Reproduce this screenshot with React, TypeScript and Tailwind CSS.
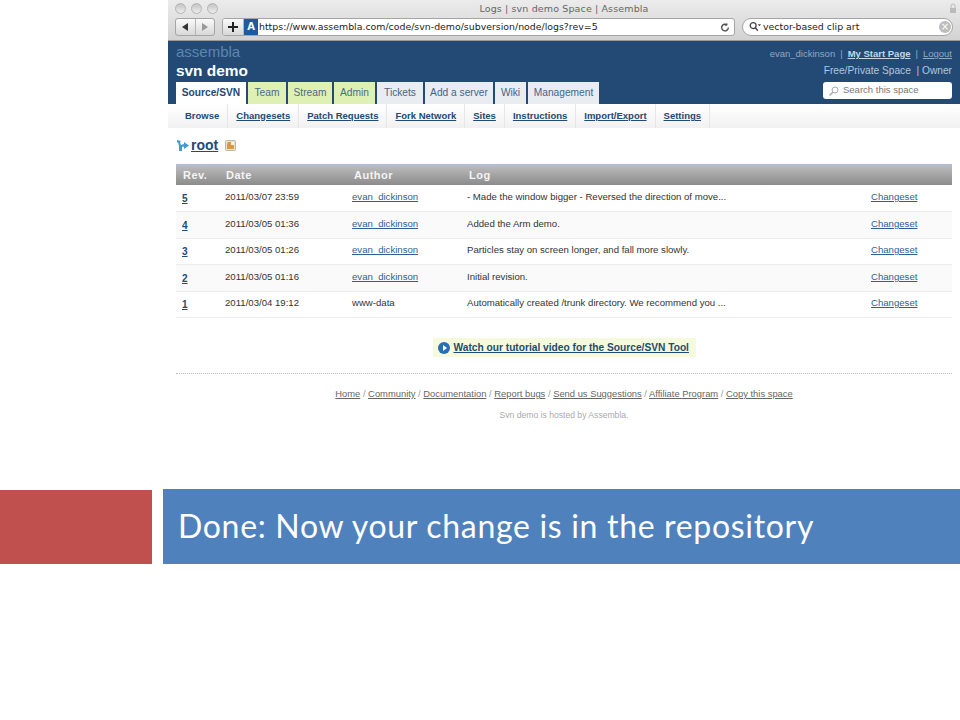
import React from "react";

const sans = "font-['Liberation_Sans',Arial,sans-serif]";

const tabs = [
  { label: "Team", green: true, w: "w-[38px]" },
  { label: "Stream", green: true, w: "w-[44px]" },
  { label: "Admin", green: true, w: "w-[41px]" },
  { label: "Tickets", green: false, w: "w-[46px]" },
  { label: "Add a server", green: false, w: "w-[68px]" },
  { label: "Wiki", green: false, w: "w-[31px]" },
  { label: "Management", green: false, w: "w-[71px]" },
];

const subnav = ["Changesets", "Patch Requests", "Fork Network", "Sites", "Instructions", "Import/Export", "Settings"];

const rows = [
  { rev: "5", date: "2011/03/07 23:59", author: "evan_dickinson", log: "- Made the window bigger - Reversed the direction of move...", h: "h-[27px]", bg: "bg-white" },
  { rev: "4", date: "2011/03/05 01:36", author: "evan_dickinson", log: "Added the Arm demo.", h: "h-[27px]", bg: "bg-[#fafafa]" },
  { rev: "3", date: "2011/03/05 01:26", author: "evan_dickinson", log: "Particles stay on screen longer, and fall more slowly.", h: "h-[26px]", bg: "bg-white" },
  { rev: "2", date: "2011/03/05 01:16", author: "evan_dickinson", log: "Initial revision.", h: "h-[27px]", bg: "bg-[#fafafa]" },
  { rev: "1", date: "2011/03/04 19:12", author: "www-data", log: "Automatically created /trunk directory. We recommend you ...", h: "h-[26px]", bg: "bg-white" },
];

const footerLinks = ["Home", "Community", "Documentation", "Report bugs", "Send us Suggestions", "Affiliate Program", "Copy this space"];

function TrafficLight() {
  return <span className="w-[11px] h-[11px] rounded-full bg-gradient-to-b from-[#c4c4c4] to-[#ededed] border border-[#b5b5b5]" />;
}

function BrowserChrome() {
  return (
    <div className="h-[41px] bg-gradient-to-b from-[#ececec] to-[#d2d2d2] border-b border-[#9a9a9a]">
      <div className="relative h-[17px] flex items-center pl-[7px] gap-[5px]">
        <TrafficLight />
        <TrafficLight />
        <TrafficLight />
        <div className="absolute inset-x-0 top-[2px] text-center text-[9.5px] leading-[14px] tracking-[0.13px] text-[#666] font-['DejaVu_Sans',sans-serif]">
          Logs | svn demo Space | Assembla
        </div>
        <svg className="absolute right-[3px] top-[3px]" width="8" height="11" viewBox="0 0 8 11">
          <path d="M2 5V3a2 2 0 0 1 4 0v2" fill="none" stroke="#bbb" />
          <rect x="1" y="5" width="6" height="5" fill="#bbb" />
        </svg>
      </div>
      <div className="h-[19px] flex items-center pl-[7px] font-['DejaVu_Sans',sans-serif] text-[9.4px] text-[#222]">
        <div className="flex h-[18px] w-[40px] rounded-[3px] border border-[#a5a5a5] bg-gradient-to-b from-[#fafafa] to-[#d8d8d8]">
          <div className="flex-1 flex items-center justify-center border-r border-[#b5b5b5]">
            <svg width="7" height="8" viewBox="0 0 7 8"><path d="M6 0v8L0 4z" fill="#333" /></svg>
          </div>
          <div className="flex-1 flex items-center justify-center">
            <svg width="7" height="8" viewBox="0 0 7 8"><path d="M1 0v8l6-4z" fill="#999" /></svg>
          </div>
        </div>
        <div className="ml-[7px] flex h-[18px] w-[513px] rounded-[3px] border border-[#a5a5a5] bg-white overflow-hidden">
          <div className="w-[21px] flex items-center justify-center border-r border-[#b5b5b5] bg-gradient-to-b from-[#fafafa] to-[#d8d8d8]">
            <svg width="10" height="10" viewBox="0 0 10 10"><path d="M5 0v10M0 5h10" stroke="#222" strokeWidth="2" /></svg>
          </div>
          <div className="w-[14px] h-[16px] bg-[#1f5a9e] text-white text-[10px] leading-[16px] text-center font-bold">A</div>
          <div className="ml-[1px] leading-[16px] flex-1 whitespace-nowrap">https://www.assembla.com/code/svn-demo/subversion/node/logs?rev=5</div>
          <svg className="mt-[3px] mr-[4px]" width="10" height="11" viewBox="0 0 24 24" fill="none" stroke="#555" strokeWidth="3.5">
            <path d="M20 12a8 8 0 1 1-3-6.2" />
            <path d="M17 1v6h-6" fill="#555" strokeWidth="1" />
          </svg>
        </div>
        <div className="ml-[7px] flex items-center h-[18px] w-[211px] rounded-full border border-[#a5a5a5] bg-white pl-[6px]">
          <svg width="12" height="11" viewBox="0 0 13 11" fill="none">
            <circle cx="4.5" cy="4.5" r="3.2" stroke="#444" strokeWidth="1.4" />
            <path d="M7 7l2.5 3" stroke="#444" strokeWidth="1.6" />
            <path d="M9.5 3h3.5l-1.7 2.2z" fill="#444" />
          </svg>
          <span className="ml-[2px] flex-1 leading-[14px]">vector-based clip art</span>
          <span className="mr-[1px] w-[12px] h-[12px] rounded-full bg-[#bdbdbd] text-white text-[10px] leading-[11px] text-center">×</span>
        </div>
      </div>
    </div>
  );
}

function SiteHeader() {
  return (
    <div className={`relative h-[63px] bg-[#224a75] ${sans}`}>
      <div className="pl-[8px] pt-[2px] h-[20px] text-[15px] leading-[18px] text-[#5f86ad]">assembla</div>
      <div className="pl-[8px] h-[19px] text-[15.4px] leading-[19px] font-bold text-white">svn demo</div>
      <div className="absolute left-[8px] bottom-0 flex h-[22px] items-stretch text-[10.2px]">
        <div className="w-[70px] mr-[2px] bg-white text-center font-bold text-[#224a75] leading-[22px]">Source/SVN</div>
        {tabs.map((t) => (
          <div
            key={t.label}
            className={`${t.w} mr-[2px] text-center leading-[22px] whitespace-nowrap ${
              t.green ? "bg-[#dff0b4] text-[#4a6c85]" : "bg-[#e9edf1] text-[#3f6589]"
            }`}
          >
            {t.label}
          </div>
        ))}
      </div>
      <div className="absolute right-[8px] top-[6px] text-[9.5px] leading-[14px] text-right text-[#8fa9c2]">
        evan_dickinson
        <span className="mx-[5px]">|</span>
        <span className="underline font-bold text-[#c5d7e8]">My Start Page</span>
        <span className="mx-[5px]">|</span>
        <span className="underline">Logout</span>
      </div>
      <div className="absolute right-[8px] top-[23px] text-[10.2px] leading-[14px] text-[#b3c7da]">Free/Private Space &nbsp;| Owner</div>
      <div className="absolute right-[8px] top-[41px] w-[129px] h-[17px] rounded-[3px] bg-white flex items-center pl-[6px]">
        <svg width="10" height="10" viewBox="0 0 10 10" fill="none" className="scale-x-[-1]">
          <circle cx="4" cy="4" r="3" stroke="#aaa" />
          <path d="M6 6l3.5 3.5" stroke="#aaa" strokeWidth="1.5" />
        </svg>
        <span className="ml-[4px] text-[9.5px] text-[#777]">Search this space</span>
      </div>
    </div>
  );
}

function SubNav() {
  return (
    <div className={`h-[24px] flex items-stretch pl-[9px] bg-gradient-to-b from-[#ffffff] to-[#f1f1f1] text-[9.5px] leading-[24px] font-bold ${sans}`}>
      <div className="px-[8px] text-[#224a75] border-r border-[#e6e6e6]">Browse</div>
      {subnav.map((label) => (
        <div key={label} className="px-[8px] border-r border-[#e6e6e6] underline text-[#224a75] whitespace-nowrap">
          {label}
        </div>
      ))}
    </div>
  );
}

function LogTable() {
  return (
    <div className={`mx-[8px] ${sans}`}>
      <div className="flex items-center h-[21px] border-t border-[#a9bed2] bg-gradient-to-b from-[#bdbdbd] to-[#8c8c8c] text-[11px] font-bold tracking-[0.5px] text-[#f4f4f4]">
        <div className="w-[49px] pl-[7px]">Rev.</div>
        <div className="w-[128px] pl-[1px]">Date</div>
        <div className="w-[115px] pl-[1px]">Author</div>
        <div className="pl-[1px]">Log</div>
      </div>
      {rows.map((r) => (
        <div key={r.rev} className={`flex items-center ${r.h} ${r.bg} pb-[2px] border-b border-[#ececec] text-[9.6px] text-[#333]`}>
          <div className="w-[49px] pl-[6px] pt-[2px] text-[10px] font-bold underline text-[#224a75]">{r.rev}</div>
          <div className="w-[127px] whitespace-nowrap">{r.date}</div>
          <div className={`w-[115px] ${r.author === "www-data" ? "" : "underline text-[#2f5f95]"}`}>{r.author}</div>
          <div className="w-[404px] whitespace-nowrap">{r.log}</div>
          <div className="underline text-[#2f5f95]">Changeset</div>
        </div>
      ))}
    </div>
  );
}

function Screenshot() {
  return (
    <div className="ml-[168px] h-[489px] flex flex-col">
      <BrowserChrome />
      <SiteHeader />
      <SubNav />
      <div className={`flex items-center h-[36px] pl-[8px] pb-[2px] ${sans}`}>
        <svg width="13" height="13" viewBox="0 0 13 13">
          <path d="M1 1l4 1-1 1 1 3 3-1V3l5 3.5L8 10V7.5L6 8v4H3V7.5L2 3 1 4z" fill="#3f9bd0" />
        </svg>
        <span className="ml-[2px] text-[14px] font-bold underline text-[#224a75]">root</span>
        <svg className="ml-[7px]" width="11" height="11" viewBox="0 0 11 11">
          <rect x="0.5" y="0.5" width="10" height="10" rx="1" fill="#e9e4d0" stroke="#b9b9a5" />
          <path d="M2 4l1-2h3l1 1h2v6H2z" fill="#d69a45" />
          <path d="M6 2h3v3H6z" fill="#f7efe0" />
        </svg>
      </div>
      <LogTable />
      <div className="mt-[20px] flex justify-center">
        <div className={`flex items-center h-[19px] w-[263px] bg-[#f5fadc] pl-[5px] ${sans}`}>
          <svg width="12" height="12" viewBox="0 0 12 12">
            <circle cx="6" cy="6" r="6" fill="#2a6db0" />
            <path d="M5 3l4 3-4 3z" fill="#fff" />
          </svg>
          <span className="ml-[4px] text-[10.2px] font-bold underline text-[#224a75] whitespace-nowrap">Watch our tutorial video for the Source/SVN Tool</span>
        </div>
      </div>
      <div className="mx-[8px] mt-[16px] border-t border-dotted border-[#bbb]" />
      <div className={`mt-[13px] text-center text-[9.4px] leading-[14px] text-[#999] ${sans}`}>
        {footerLinks.map((l, i) => (
          <span key={l}>
            {i > 0 && " / "}
            <span className="underline text-[#666]">{l}</span>
          </span>
        ))}
      </div>
      <div className={`mt-[8px] text-center text-[8.6px] leading-[12px] text-[#aaa] ${sans}`}>Svn demo is hosted by Assembla.</div>
    </div>
  );
}

export default function App() {
  return (
    <div className="w-[960px] h-[720px] overflow-hidden bg-white flex flex-col">
      <Screenshot />
      <div className="flex h-[75px]">
        <div className="w-[152px] mt-[1px] bg-[#c0504d]" />
        <div className="ml-[11px] flex-1 bg-[#4f81bd] flex items-center pl-[15px] pb-[2px] text-[32px] tracking-[0.68px] text-white font-['Lato','Open_Sans',sans-serif]">
          Done: Now your change is in the repository
        </div>
      </div>
    </div>
  );
}
